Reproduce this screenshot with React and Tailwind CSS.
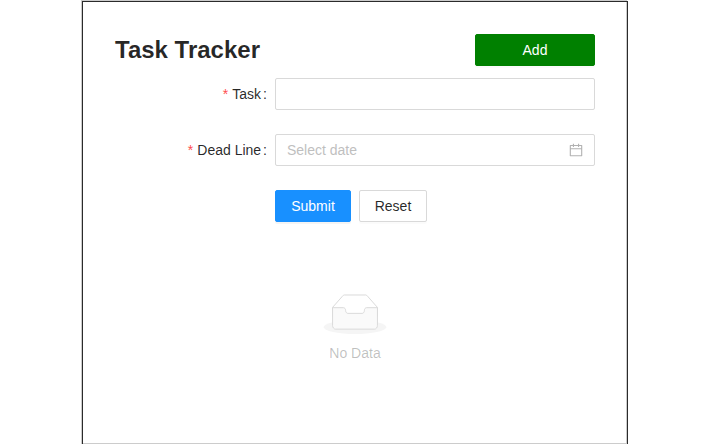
import React from "react";

function Label({ children }) {
  return (
    <div className="flex h-8 w-40 items-center justify-end">
      <span className="mr-1 font-['Liberation_Sans',sans-serif] text-sm leading-none text-[#ff4d4f]">*</span>
      <span>{children}</span>
      <span className="mr-2 ml-0.5">:</span>
    </div>
  );
}

function CalendarIcon() {
  return (
    <svg viewBox="64 64 896 896" width="14" height="14" fill="currentColor" className="text-black/30" aria-hidden="true">
      <path d="M880 184H712v-64c0-4.4-3.6-8-8-8h-56c-4.4 0-8 3.6-8 8v64H384v-64c0-4.4-3.6-8-8-8h-56c-4.4 0-8 3.6-8 8v64H144c-17.7 0-32 14.3-32 32v664c0 17.7 14.3 32 32 32h736c17.7 0 32-14.3 32-32V216c0-17.7-14.3-32-32-32zm-40 656H184V460h656v380zM184 392V256h128v48c0 4.4 3.6 8 8 8h56c4.4 0 8-3.6 8-8v-48h256v48c0 4.4 3.6 8 8 8h56c4.4 0 8-3.6 8-8v-48h128v136H184z" />
    </svg>
  );
}

function EmptyState() {
  return (
    <div className="mt-[72px] flex flex-col items-center text-black/25">
      <svg width="64" height="40" viewBox="0 0 64 41" aria-hidden="true">
        <g transform="translate(0 1)" fill="none" fillRule="evenodd">
          <ellipse fill="#f5f5f5" cx="32" cy="33" rx="32" ry="7" />
          <g fillRule="nonzero" stroke="#d9d9d9">
            <path d="M55 12.76L44.854 1.258C44.367.474 43.656 0 42.907 0H21.093c-.749 0-1.46.474-1.947 1.257L9 12.761V22h46v-9.24z" />
            <path
              d="M41.613 15.931c0-1.605.994-2.93 2.227-2.931H55v18.137C55 33.26 53.68 35 52.05 35h-40.1C10.32 35 9 33.259 9 31.137V13h11.16c1.233 0 2.227 1.323 2.227 2.928v.022c0 1.605 1.005 2.901 2.237 2.901h14.752c1.232 0 2.237-1.308 2.237-2.913v-.007z"
              fill="#fafafa"
            />
          </g>
        </g>
      </svg>
      <div className="mt-2">No Data</div>
    </div>
  );
}

export default function App() {
  return (
    <div className="h-[444px] overflow-hidden bg-white pt-px pl-[82px] font-['Liberation_Sans',Arial,sans-serif] text-sm leading-[22px] text-black/85">
      <div className="h-[444px] w-[546px] border border-[#2b2b2b] px-8 pt-8 shadow-[-1px_-1px_0_#ccc,inset_-1px_-1px_0_#ccc]">
        <header className="flex h-8 items-center justify-between">
          <h1 className="text-2xl font-bold">Task Tracker</h1>
          <button className="h-8 w-[120px] rounded-xs border border-[green] bg-[green] text-white shadow-[0_2px_0_rgba(0,0,0,0.016)]">
            Add
          </button>
        </header>
        <form className="mt-3 flex flex-col gap-6">
          <div className="flex">
            <Label>Task</Label>
            <input aria-label="Task" className="h-8 w-80 rounded-xs border border-[#d9d9d9] px-[11px]" />
          </div>
          <div className="flex">
            <Label>Dead Line</Label>
            <div className="flex h-8 w-80 items-center justify-between rounded-xs border border-[#d9d9d9] px-[11px]">
              <span className="text-[#bfbfbf]">Select date</span>
              <CalendarIcon />
            </div>
          </div>
          <div className="ml-40 flex gap-2">
            <button type="button" className="h-8 w-[76px] rounded-xs border border-[#1890ff] bg-[#1890ff] text-white shadow-[0_2px_0_rgba(0,0,0,0.045)]">
              Submit
            </button>
            <button type="button" className="h-8 w-[68px] rounded-xs border border-[#d9d9d9] bg-white shadow-[0_2px_0_rgba(0,0,0,0.016)]">
              Reset
            </button>
          </div>
        </form>
        <EmptyState />
      </div>
    </div>
  );
}
